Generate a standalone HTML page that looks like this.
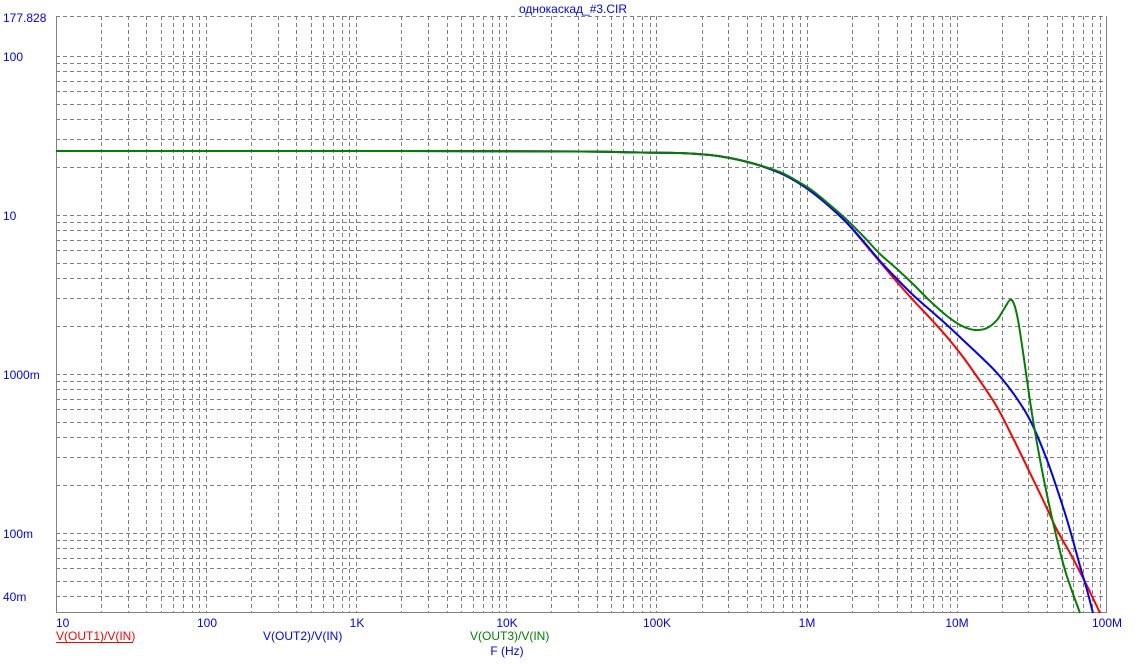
<!DOCTYPE html>
<html><head><meta charset="utf-8"><style>
body{margin:0;background:#fff;width:1139px;height:664px;overflow:hidden;font-family:"Liberation Sans",Arial,sans-serif}
svg{position:absolute;left:0;top:0}
text{font-size:12px;font-family:"Liberation Sans",Arial,sans-serif}
</style></head><body>
<svg id="s" width="1139" height="664" xmlns="http://www.w3.org/2000/svg">
<g id="grid" stroke="#808080" stroke-width="1" stroke-dasharray="4,3" fill="none"></g>
<line x1="56.5" y1="16" x2="56.5" y2="612.5" stroke="#808080"/>
<line x1="56" y1="612.5" x2="1107" y2="612.5" stroke="#808080"/>
<line x1="1106.5" y1="16" x2="1106.5" y2="612.5" stroke="#808080"/>
<g fill="none" stroke-width="2" stroke-linejoin="round">
<path id="r" stroke="#ff0000"/>
<path id="b" stroke="#0000ff"/>
<path id="gr" stroke="#008000"/>
</g>
<g fill="#0000ff">
<text x="3" y="22">177.828</text>
<text x="3" y="61">100</text>
<text x="3" y="220">10</text>
<text x="3" y="379">1000m</text>
<text x="3" y="538">100m</text>
<text x="3" y="601">40m</text>
<text x="56" y="627">10</text>
<text x="207" y="627" text-anchor="middle">100</text>
<text x="357" y="627" text-anchor="middle">1K</text>
<text x="507" y="627" text-anchor="middle">10K</text>
<text x="657" y="627" text-anchor="middle">100K</text>
<text x="807" y="627" text-anchor="middle">1M</text>
<text x="957" y="627" text-anchor="middle">10M</text>
<text x="1107" y="627" text-anchor="middle">100M</text>
<text x="573" y="13" text-anchor="middle">однокаскад_#3.CIR</text>
<text x="263" y="640">V(OUT2)/V(IN)</text>
<text x="507" y="655" text-anchor="middle">F (Hz)</text>
</g>
<text x="56" y="640" fill="#ff0000">V(OUT1)/V(IN)</text>
<line x1="56" y1="642.5" x2="133" y2="642.5" stroke="#ff0000"/>
<text x="470" y="640" fill="#008000">V(OUT3)/V(IN)</text>
</svg>
<script>
var g=document.getElementById('grid'),h='';
var x0=56,dx=150.1,y100=56,dy=159;
for(var d=0;d<7;d++){for(var k=1;k<10;k++){var x=Math.round(x0+dx*(d+Math.log10(k)))+.5;if(d==0&&k==1)continue;h+='<line x1="'+x+'" y1="16" x2="'+x+'" y2="612"/>';}}
for(var d=-2;d<3;d++){for(var k=1;k<10;k++){var v=d+Math.log10(k);var y=Math.round(y100-(v-2)*dy)+.5;if(y<16||y>611)continue;h+='<line x1="56" y1="'+y+'" x2="1106" y2="'+y+'"/>';}}
h+='<line x1="56" y1="16.5" x2="1106" y2="16.5"/>';
g.innerHTML=h;
function cr(p){var s='M'+p[0][0]+','+p[0][1];for(var i=0;i<p.length-1;i++){var a=p[i-1]||p[i],b=p[i],c=p[i+1],e=p[i+2]||c;
s+=' C'+(b[0]+(c[0]-a[0])/6).toFixed(1)+','+(b[1]+(c[1]-a[1])/6).toFixed(1)+' '+(c[0]-(e[0]-b[0])/6).toFixed(1)+','+(c[1]-(e[1]-b[1])/6).toFixed(1)+' '+c[0]+','+c[1];}return s;}
var com=[[56,151],[400,151],[582,151.5],[640,152.5],[680,153],[710,155],[730,158],[755,164],[780,173],[797,182],[813,193],[830,207],[847,223]];
var R=com.concat([[864,243],[880,262],[897,282],[913,300],[930,318],[947,337],[963,357],[980,381],[997,407],[1013,438],[1030,473],[1044,502],[1057,530],[1070,553],[1080,572],[1090,592],[1100,613]]);
var B=com.concat([[864,242],[880,261],[897,279],[913,295],[930,310],[947,325],[963,340],[980,356],[997,373],[1013,393],[1030,420],[1047,460],[1063,507],[1072,537],[1080,566],[1087,590],[1093,613]]);
var G=[[56,151],[400,151],[582,151.5],[640,152.5],[680,153],[710,155],[730,158],[755,164],[780,172],[797,181],[813,191],[830,205],[847,220],[864,237],[880,254],[897,269],[913,284],[930,301],[947,316],[962,326],[975,330],[987,328],[997,320],[1004,309],[1010,300],[1014,304],[1018,320],[1023,352],[1033,420],[1047,495],[1063,563],[1072,591],[1080,613]];
document.getElementById('r').setAttribute('d',cr(R));
document.getElementById('b').setAttribute('d',cr(B));
document.getElementById('gr').setAttribute('d',cr(G));
</script>
</body></html>
